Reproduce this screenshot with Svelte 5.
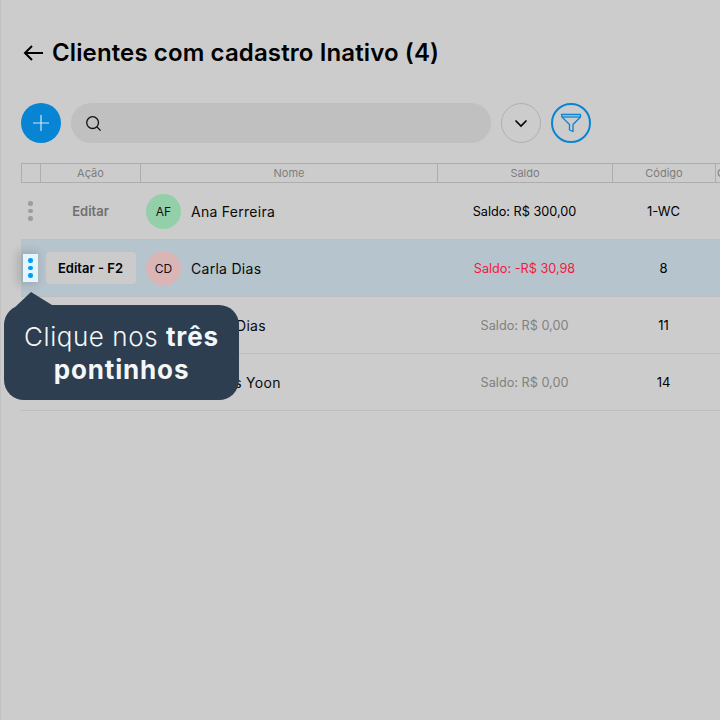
<script>
  const rows = [
    { ini: 'AF', name: 'Ana Ferreira', saldo: 'Saldo: R$ 300,00', tone: 'pos', code: '1-WC', av: 'green' },
    { ini: 'CD', name: 'Carla Dias', saldo: 'Saldo: -R$ 30,98', tone: 'neg', code: '8', av: 'pink', active: true },
    { ini: 'BD', name: 'Bruno Dias', saldo: 'Saldo: R$ 0,00', tone: 'zero', code: '11', av: 'green' },
    { ini: 'MY', name: 'Marcus Yoon', saldo: 'Saldo: R$ 0,00', tone: 'zero', code: '14', av: 'pink' }
  ];
</script>

<div class="page">
  <header class="title">
    <svg class="back" width="22" height="22" viewBox="0 0 22 22" fill="none" stroke="#000" stroke-width="2"><path d="M21 11H3M10 4l-7 7 7 7"/></svg>
    <h1>Clientes com cadastro Inativo (4)</h1>
  </header>

  <div class="toolbar">
    <button class="add" aria-label="Adicionar">
      <svg width="18" height="18" viewBox="0 0 18 18" stroke="#d5e6f2" stroke-width="1.2"><path d="M9 1v16M1 9h16"/></svg>
    </button>
    <div class="search">
      <svg width="17" height="17" viewBox="0 0 17 17" fill="none" stroke="#111" stroke-width="1.3"><circle cx="7.6" cy="7.6" r="5.9"/><path d="M12 12l3.6 3.6"/></svg>
    </div>
    <button class="round" aria-label="Expandir">
      <svg width="14" height="9" viewBox="0 0 14 9" fill="none" stroke="#000" stroke-width="1.6"><path d="M1.500 1.500L7 7l5.500-5.500"/></svg>
    </button>
    <button class="round filter" aria-label="Filtrar">
      <svg width="22" height="22" viewBox="0 0 22 22" fill="none" stroke="#0a84d6" stroke-width="1.3"><path d="M1.500 2.500h19v2.500l-7.500 7.500v7l-3.500-1.500v-5.500L2 5z" stroke-linejoin="round"/><path d="M2 5h18"/></svg>
    </button>
  </div>

  <div class="table">
    <div class="thead">
      <div class="c-dots th"></div>
      <div class="c-act th">Ação</div>
      <div class="c-name th">Nome</div>
      <div class="c-saldo th">Saldo</div>
      <div class="c-code th">Código</div>
      <div class="c-rest th">C</div>
    </div>
    {#each rows as r}
      <div class="row" class:active={r.active}>
        <div class="c-dots cell">
          <span class="dots" class:on={r.active}><i></i><i></i><i></i></span>
        </div>
        <div class="c-act cell">
          {#if r.active}
            <span class="edit-btn">Editar - F2</span>
          {:else if r.ini === 'AF'}
            <span class="edit">Editar</span>
          {/if}
        </div>
        <div class="c-name cell namecell">
          <span class="avatar {r.av}">{r.ini}</span>
          <span class="nm">{r.name}</span>
        </div>
        <div class="c-saldo cell saldo {r.tone}">{r.saldo}</div>
        <div class="c-code cell code">{r.code}</div>
      </div>
    {/each}
  </div>

  <div class="tip">
    <svg class="tip-arrow" width="40" height="18" viewBox="0 0 40 18"><path d="M0 18L19 0l21 13v5z" fill="#2c3e50"/></svg>
    Clique nos <b>três pontinhos</b>
  </div>
</div>

<style>
  :global(body) { margin: 0; background: #cccccc; }
  .page {
    position: relative;
    width: 720px;
    height: 720px;
    overflow: hidden;
    box-sizing: border-box;
    background: #cccccc;
    border-left: 1px solid #c2c2c2;
    padding: 33px 0 0 20px;
    font-family: Inter, "Liberation Sans", sans-serif;
    color: #000;
  }
  .title { display: flex; align-items: center; gap: 8px; height: 40px; }
  .back { flex: none; margin-left: 1px; }
  h1 { margin: 0; font-size: 24px; font-weight: 600; line-height: 40px; white-space: nowrap; letter-spacing: 0.12px; }

  .toolbar { display: flex; align-items: center; margin-top: 30px; height: 40px; }
  button { padding: 0; margin: 0; font: inherit; background: none; cursor: pointer; }
  .add {
    width: 40px; height: 40px; border-radius: 50%; border: 0; background: #0784d3;
    display: flex; align-items: center; justify-content: center; flex: none;
  }
  .search {
    width: 420px; height: 40px; margin-left: 10px; box-sizing: border-box; border-radius: 20px;
    background: #c0c0c0; display: flex; align-items: center; padding-left: 14px; flex: none;
  }
  .round {
    width: 40px; height: 40px; box-sizing: border-box; border-radius: 50%; border: 1px solid #b0b0b0;
    margin-left: 10px; display: flex; align-items: center; justify-content: center; flex: none;
  }
  .filter { border: 2px solid #0a84d0; }

  .table { margin-top: 20px; width: 700px; }
  .thead {
    display: flex; height: 20px; box-sizing: border-box;
    border-top: 1px solid #adadad; border-bottom: 1px solid #adadad; border-left: 1px solid #adadad;
  }
  .th {
    box-sizing: border-box; border-right: 1px solid #adadad; font-size: 11px; color: #7d7d7d;
    display: flex; align-items: center; justify-content: center; line-height: 18px; overflow: hidden;
  }
  .c-dots { width: 19px; flex: none; }
  .c-act { width: 100px; flex: none; }
  .c-name { width: 297px; flex: none; }
  .c-saldo { width: 175px; flex: none; }
  .c-code { width: 103px; flex: none; }
  .c-rest { flex: 1; border-right: 0; justify-content: flex-start; padding-left: 1px; }

  .row {
    display: flex; height: 57px; box-sizing: border-box; border-bottom: 1px solid #bdbdbd; width: 700px;
  }
  .row.active { background: #b6c4ce; }
  .cell { display: flex; align-items: center; justify-content: center; box-sizing: border-box; font-size: 13px; }
  .dots {
    width: 15px; height: 28px; box-sizing: border-box; display: flex; flex-direction: column;
    align-items: center; justify-content: center; gap: 3px;
  }
  .dots i { width: 4.500px; height: 4.500px; border-radius: 50%; background: #9c9c9c; display: block; }
  .dots.on { background: #e3f5ff; box-shadow: -3px 0 10px 3px rgba(0,0,0,0.14); }
  .dots.on i { background: #009cf5; }
  .edit { font-size: 13px; font-weight: 600; color: #707070; margin-left: 1px; }
  .edit-btn {
    width: 90px; height: 32px; margin-left: 1px; border-radius: 4px; background: #cbcbcb; color: #000; font-size: 13px; font-weight: 600;
    display: flex; align-items: center; justify-content: center;
  }
  .namecell { justify-content: flex-start; padding-left: 6px; gap: 9px; }
  .avatar {
    width: 35px; height: 35px; margin-right: 1px; border-radius: 50%; display: flex; align-items: center; justify-content: center;
    font-size: 12px; color: #111; flex: none;
  }
  .avatar.green { background: #93cfa9; }
  .avatar.pink { background: #d9b5b5; }
  .nm { font-size: 14px; letter-spacing: 0.28px; color: #0a0a0a; }
  .saldo { font-size: 12.700px; }
  .pos { color: #000; }
  .neg { color: #f5193c; }
  .zero { color: #808080; }
  .code { font-size: 13px; }

  .tip {
    position: absolute; left: 3px; top: 305px; width: 235px; height: 95px; box-sizing: border-box;
    border-radius: 20px; background: #2c3e50; color: #f4f6f7;
    font-size: 26px; font-weight: 300; line-height: 33px; text-align: center; padding: 15px 12px 0; letter-spacing: 0.55px;
  }
  .tip b { font-weight: 700; letter-spacing: 0.85px; }
  .tip-arrow { position: absolute; left: 8px; top: -13px; }
</style>
